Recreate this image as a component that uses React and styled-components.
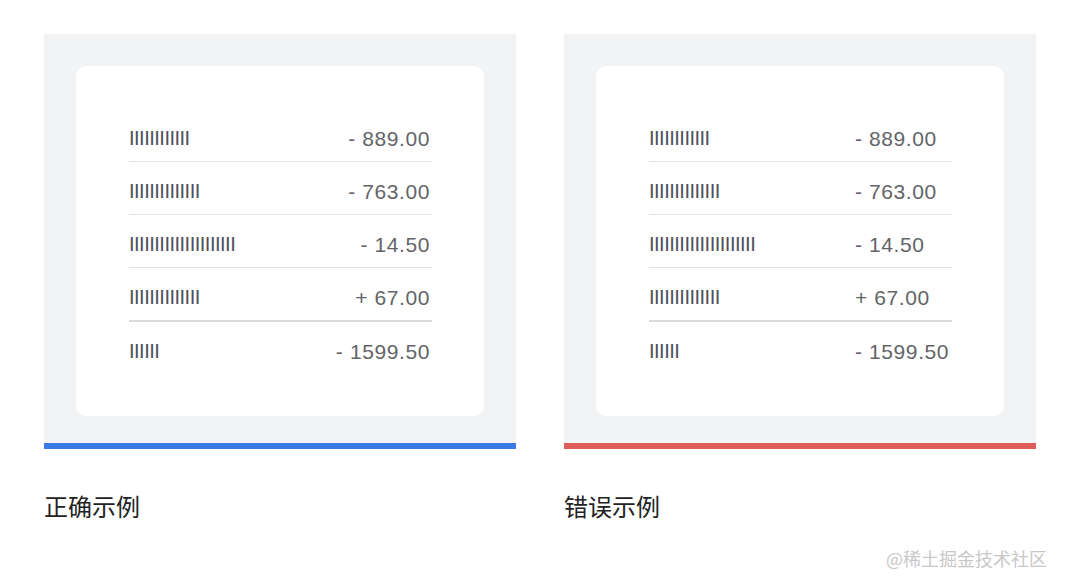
import styled, { createGlobalStyle } from 'styled-components';

const GlobalStyle = createGlobalStyle`
  html, body {
    margin: 0;
    padding: 0;
    background: #ffffff;
  }
  body {
    font-family: "Liberation Sans", "Noto Sans CJK SC", sans-serif;
  }
`;

const rows = [
  { bars: 12, amount: '- 889.00' },
  { bars: 14, amount: '- 763.00' },
  { bars: 21, amount: '- 14.50' },
  { bars: 14, amount: '+ 67.00' },
  { bars: 6, amount: '- 1599.50' },
];

const Page = styled.div`
  position: relative;
  width: 1066px;
  height: 588px;
  box-sizing: border-box;
  padding: 34px 0 0 44px;
  display: flex;
  gap: 48px;
`;

const Column = styled.div`
  width: 472px;
  display: flex;
  flex-direction: column;
`;

const Panel = styled.div`
  background: #f2f3f5;
  padding: 32px 32px 27px;
  border-bottom: 6px solid ${(p) => p.accent};
`;

const Card = styled.div`
  background: #ffffff;
  border-radius: 10px;
  padding: 43px 52px 42px 53px;
`;

const Row = styled.div`
  display: flex;
  align-items: center;
  justify-content: ${(p) => (p.align === 'left' ? 'flex-start' : 'space-between')};
  height: 20px;
  padding: 20px 0 12px;
  border-bottom: ${(p) => (p.strong ? '2px solid #d9dadc' : '1px solid #e3e4e6')};
  &:last-child {
    border-bottom: none;
  }
`;

const Bars = styled.span`
  width: ${(p) => (p.align === 'left' ? '206px' : 'auto')};
  font-size: 20px;
  line-height: 20px;
  letter-spacing: -0.5px;
  color: #4c5159;
  white-space: nowrap;
  margin-top: -3px;
`;

const Amount = styled.span`
  font-size: 21px;
  line-height: 20px;
  letter-spacing: 0.6px;
  color: #636467;
  white-space: nowrap;
  margin-right: ${(p) => (p.align === 'left' ? '0' : '2px')};
`;

const Label = styled.div`
  margin-top: 41px;
  font-size: 24px;
  line-height: 32px;
  color: #222222;
  font-family: "Noto Sans CJK SC", "Liberation Sans", sans-serif;
`;

const Watermark = styled.div`
  position: absolute;
  right: 19px;
  bottom: 19px;
  font-size: 18px;
  line-height: 22px;
  color: #c8c8c8;
  font-family: "Noto Sans CJK SC", "Liberation Sans", sans-serif;
`;

const Example = ({ accent, align, label }) => (
  <Column>
    <Panel accent={accent}>
      <Card>
        {rows.map((r, i) => (
          <Row key={i} align={align} strong={i === 3}>
            <Bars align={align}>{'I'.repeat(r.bars)}</Bars>
            <Amount align={align}>{r.amount}</Amount>
          </Row>
        ))}
      </Card>
    </Panel>
    <Label>{label}</Label>
  </Column>
);

export default function App() {
  return (
    <>
      <GlobalStyle />
      <Page>
        <Example accent="#3a7ae4" align="right" label="正确示例" />
        <Example accent="#e05c5c" align="left" label="错误示例" />
        <Watermark>@稀土掘金技术社区</Watermark>
      </Page>
    </>
  );
}
